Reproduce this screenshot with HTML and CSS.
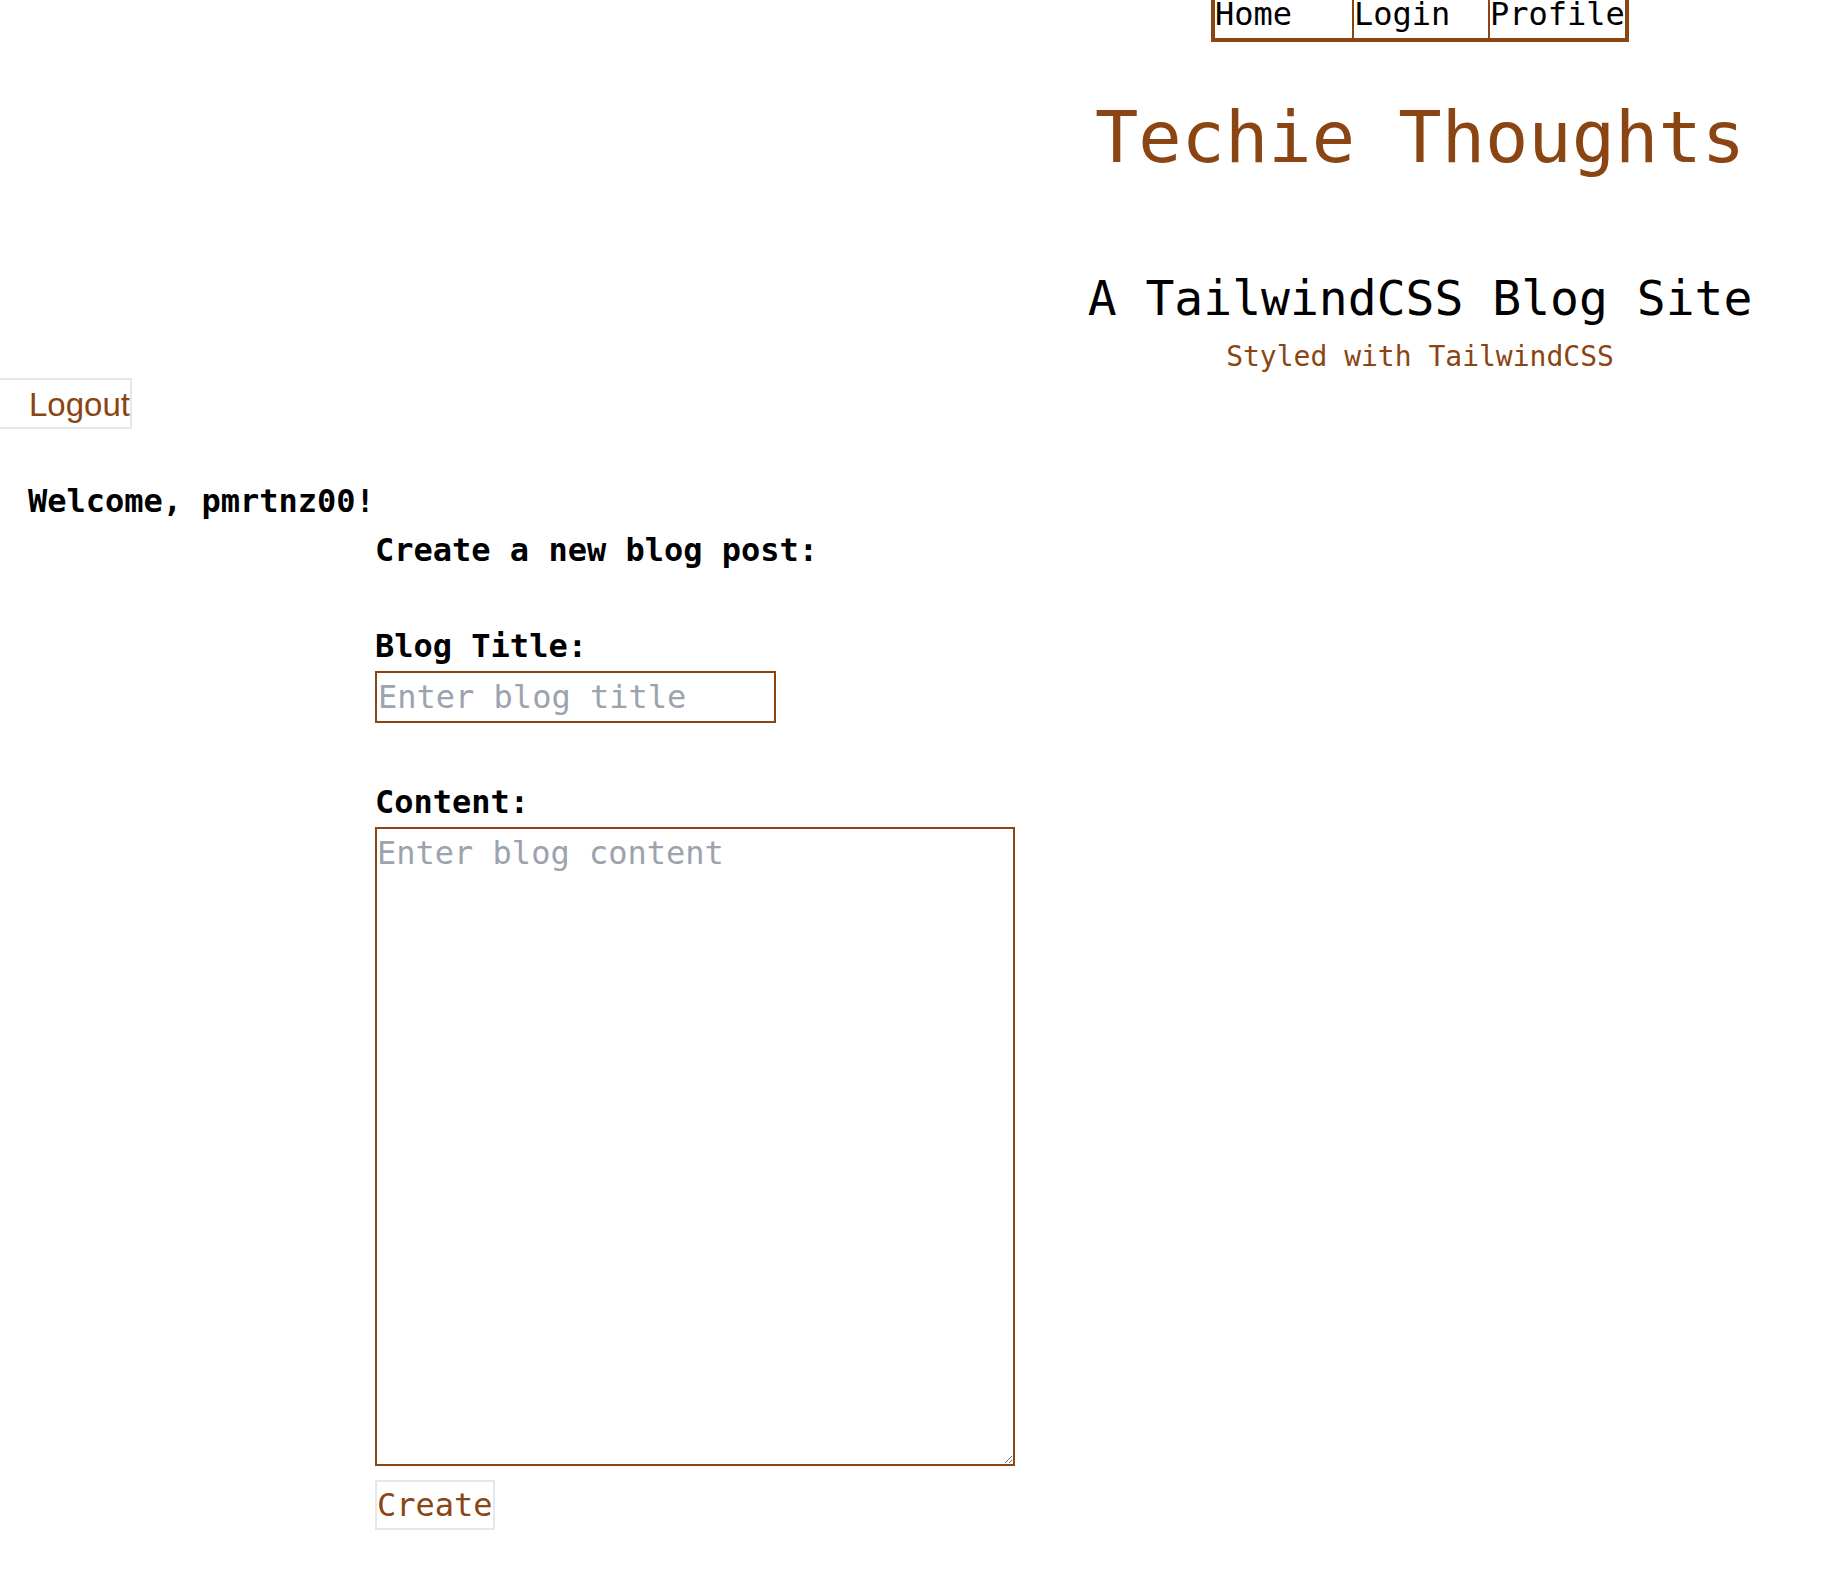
FILE: index.html
```html
<!DOCTYPE html>
<html lang="en">
<head>
<meta charset="utf-8">
<title>Techie Thoughts</title>
<link rel="stylesheet" href="styles.css">
</head>
<body>
<header class="site-header">
  <nav class="nav">
    <ul class="nav-list">
      <li class="nav-item nav-home"><a href="#">Home</a></li>
      <li class="nav-item nav-login"><a href="#">Login</a></li>
      <li class="nav-item nav-profile"><a href="#">Profile</a></li>
    </ul>
  </nav>
  <h1 class="site-title">Techie Thoughts</h1>
  <h2 class="site-subtitle">A TailwindCSS Blog Site</h2>
  <p class="site-tagline">Styled with TailwindCSS</p>
</header>
<main class="main">
  <button class="logout" type="button">Logout</button>
  <p class="welcome">Welcome, pmrtnz00!</p>
  <section class="create">
    <h3 class="create-heading">Create a new blog post:</h3>
    <form class="create-form">
      <div class="field field-title">
        <label class="field-label" for="title">Blog Title:</label>
        <input class="title-input" id="title" type="text" placeholder="Enter blog title">
      </div>
      <div class="field field-content">
        <label class="field-label" for="content">Content:</label>
        <textarea class="content-input" id="content" placeholder="Enter blog content"></textarea>
      </div>
      <button class="create-btn" type="submit">Create</button>
    </form>
  </section>
</main>
</body>
</html>
```
FILE: styles.css
```css
* {
  box-sizing: border-box;
}

html, body {
  margin: 0;
  padding: 0;
  background: #ffffff;
}

body {
  font-family: "DejaVu Sans Mono", monospace;
  font-size: 32px;
  line-height: 48px;
  color: #000000;
}

/* Header */
.site-header {
  margin-left: 1004px;
  width: 832px;
  display: flex;
  flex-direction: column;
  align-items: center;
}

.nav-list {
  list-style: none;
  margin: 0;
  padding: 0;
  display: flex;
  border: 4px solid #8b4513;
  border-top: none;
}

.nav-item {
  height: 38px;
  line-height: 28px;
}

.nav-item a {
  color: #000000;
  text-decoration: none;
}

.nav-home { width: 137px; }
.nav-login { width: 136px; border-left: 2px solid #8b4513; }
.nav-profile { width: 137px; border-left: 2px solid #8b4513; }

.site-title {
  margin: 55px 0 0;
  font-size: 72px;
  line-height: 80px;
  font-weight: normal;
  color: #8b4513;
  white-space: nowrap;
}

.site-subtitle {
  margin: 89px 0 0;
  font-size: 48px;
  line-height: 64px;
  font-weight: normal;
  color: #000000;
  white-space: nowrap;
}

.site-tagline {
  margin: 7px 0 0;
  font-size: 28px;
  line-height: 40px;
  color: #8b4513;
}

/* Main */
.main {
  display: flex;
  flex-direction: column;
  align-items: flex-start;
}

.logout {
  margin: 1px 0 0 -2px;
  padding: 2px 0 0 29px;
  height: 51px;
  border: 2px solid #e5e7eb;
  background: #ffffff;
  color: #8b4513;
  font-family: "Liberation Sans", Arial, sans-serif;
  font-size: 33px;
  line-height: 45px;
}

.welcome {
  margin: 48px 0 0 28px;
  font-weight: bold;
  line-height: 48px;
}

.create {
  margin: 1px 0 0 375px;
}

.create-heading {
  margin: 0;
  font-size: 32px;
  line-height: 48px;
  font-weight: bold;
}

.create-form {
  display: flex;
  flex-direction: column;
  align-items: flex-start;
}

.field {
  display: flex;
  flex-direction: column;
  align-items: flex-start;
}

.field-title {
  margin-top: 48px;
}

.field-content {
  margin-top: 55px;
}

.field-label {
  font-weight: bold;
  line-height: 48px;
}

.title-input {
  width: 401px;
  height: 52px;
  margin: 1px 0 0;
  padding: 0 1px;
  border: 2px solid #8b4513;
  font-family: "DejaVu Sans Mono", monospace;
  font-size: 32px;
  line-height: 48px;
  color: #000000;
  outline: none;
}

.content-input {
  width: 640px;
  height: 639px;
  margin: 1px 0 0;
  padding: 0;
  border: 2px solid #8b4513;
  font-family: "DejaVu Sans Mono", monospace;
  font-size: 32px;
  line-height: 48px;
  color: #000000;
  outline: none;
  resize: both;
}

.title-input::placeholder,
.content-input::placeholder {
  color: #9ca3af;
  opacity: 1;
}

.create-btn {
  margin-top: 14px;
  padding: 0;
  height: 50px;
  border: 2px solid #e5e7eb;
  background: #ffffff;
  color: #8b4513;
  font-family: "DejaVu Sans Mono", monospace;
  font-size: 32px;
  line-height: 46px;
}
```
